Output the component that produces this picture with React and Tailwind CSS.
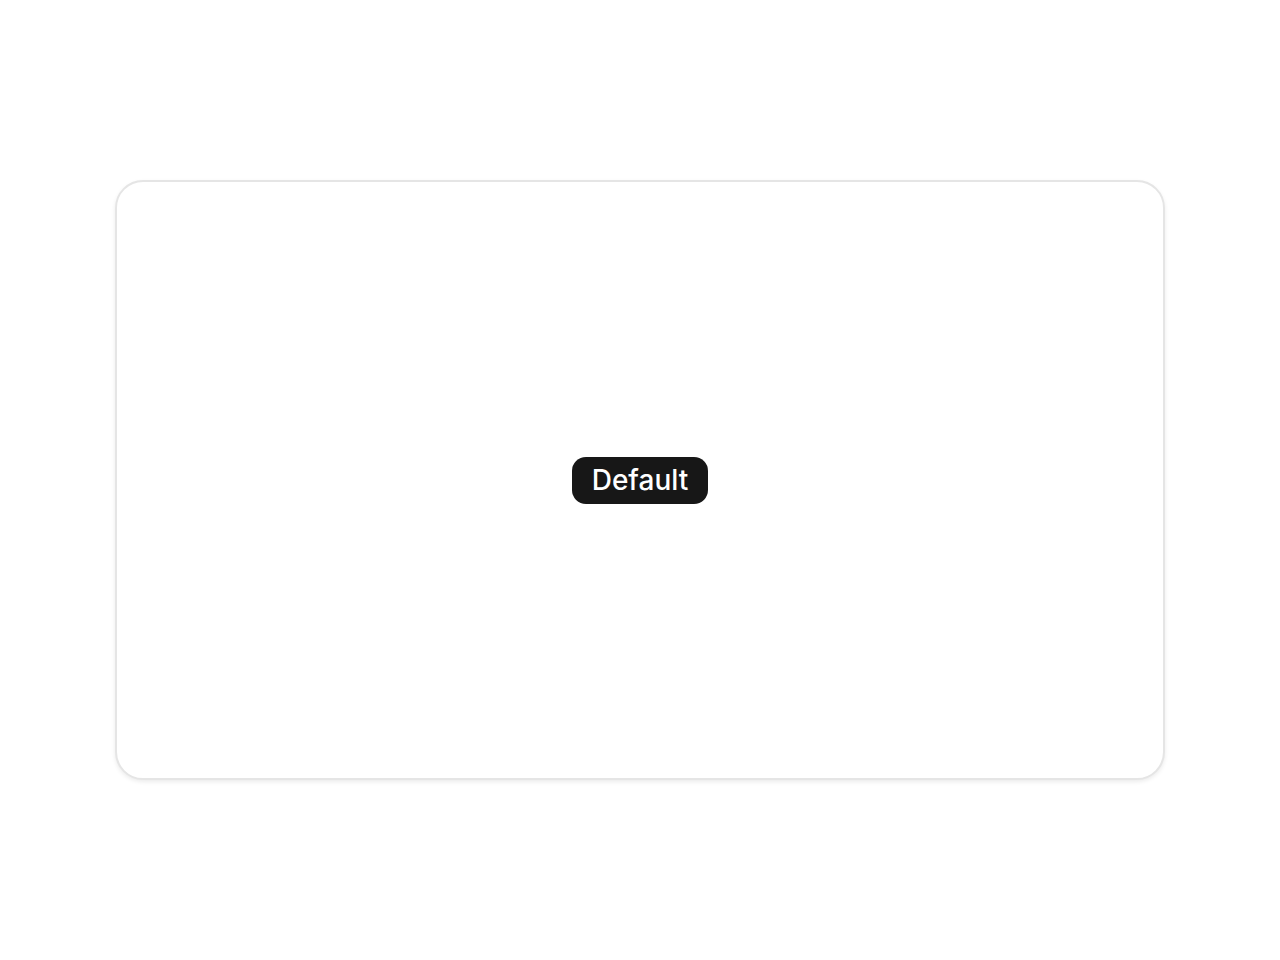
const App = () => {
  return (
    <div className="min-h-screen w-full flex items-center justify-center bg-white">
      <div className="w-[1050px] h-[600px] flex items-center justify-center bg-white rounded-[28px] border-2 border-[#e5e5e5] shadow-[0_2px_4px_rgba(0,0,0,0.08)]">
        <button
          type="button"
          className="h-[47px] px-[20px] rounded-[14px] bg-[#171717] text-white text-[28px] font-medium leading-none"
          style={{ fontFamily: "Inter, 'Noto Sans', sans-serif" }}
        >
          Default
        </button>
      </div>
    </div>
  );
};

export default App;
